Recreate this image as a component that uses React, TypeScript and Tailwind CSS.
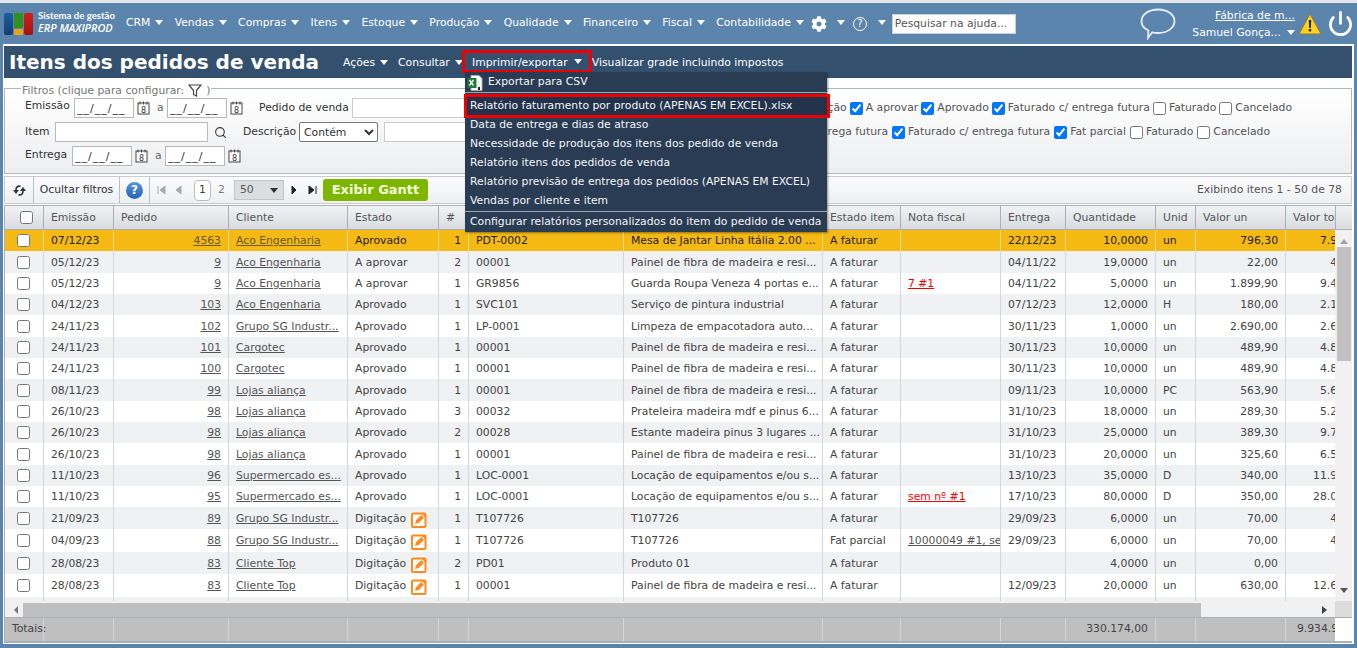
import { Search, Power } from "lucide-react";
import { FaCog } from "react-icons/fa";

const navItems = ["CRM", "Vendas", "Compras", "Itens", "Estoque", "Produção", "Qualidade", "Financeiro", "Fiscal", "Contabilidade"];

const cols = [
    "w-[39px]", "w-[70px]", "w-[115px]", "w-[119px]", "w-[91px]", "w-[30px]", "w-[155px]", "w-[199px]",
    "w-[78px]", "w-[100px]", "w-[65px]", "w-[90px]", "w-[40px]", "w-[90px]", "w-[90px]",
];

const headers = ["Emissão", "Pedido", "Cliente", "Estado", "#", "Item", "Descrição", "Estado item", "Nota fiscal", "Entrega", "Quantidade", "Unid", "Valor un", "Valor total"];

const painel = "Painel de fibra de madeira e resi...";
const loc = "Locação de equipamentos e/ou s...";

const rows = [
    { h: "h-[21px]", em: "07/12/23", ped: "4563", cli: "Aco Engenharia", est: "Aprovado", n: "1", item: "PDT-0002", desc: "Mesa de Jantar Linha Itália 2.00 ...", ei: "A faturar", nf: "", ent: "22/12/23", q: "10,0000", u: "un", vu: "796,30", vt: "7.963,00" },
    { h: "h-[22px]", em: "05/12/23", ped: "9", cli: "Aco Engenharia", est: "A aprovar", n: "2", item: "00001", desc: painel, ei: "A faturar", nf: "", ent: "04/11/22", q: "19,0000", u: "un", vu: "22,00", vt: "418,00" },
    { h: "h-[21px]", em: "05/12/23", ped: "9", cli: "Aco Engenharia", est: "A aprovar", n: "1", item: "GR9856", desc: "Guarda Roupa Veneza 4 portas e...", ei: "A faturar", nf: "7 #1", ent: "04/11/22", q: "5,0000", u: "un", vu: "1.899,90", vt: "9.499,50" },
    { h: "h-[21px]", em: "04/12/23", ped: "103", cli: "Aco Engenharia", est: "Aprovado", n: "1", item: "SVC101", desc: "Serviço de pintura industrial", ei: "A faturar", nf: "", ent: "07/12/23", q: "12,0000", u: "H", vu: "180,00", vt: "2.160,00" },
    { h: "h-[22px]", em: "24/11/23", ped: "102", cli: "Grupo SG Industr...", est: "Aprovado", n: "1", item: "LP-0001", desc: "Limpeza de empacotadora auto...", ei: "A faturar", nf: "", ent: "30/11/23", q: "1,0000", u: "un", vu: "2.690,00", vt: "2.690,00" },
    { h: "h-[21px]", em: "24/11/23", ped: "101", cli: "Cargotec", est: "Aprovado", n: "1", item: "00001", desc: painel, ei: "A faturar", nf: "", ent: "30/11/23", q: "10,0000", u: "un", vu: "489,90", vt: "4.899,00" },
    { h: "h-[21px]", em: "24/11/23", ped: "100", cli: "Cargotec", est: "Aprovado", n: "1", item: "00001", desc: painel, ei: "A faturar", nf: "", ent: "30/11/23", q: "10,0000", u: "un", vu: "489,90", vt: "4.899,00" },
    { h: "h-[22px]", em: "08/11/23", ped: "99", cli: "Lojas aliança", est: "Aprovado", n: "1", item: "00001", desc: painel, ei: "A faturar", nf: "", ent: "09/11/23", q: "10,0000", u: "PC", vu: "563,90", vt: "5.639,00" },
    { h: "h-[21px]", em: "26/10/23", ped: "98", cli: "Lojas aliança", est: "Aprovado", n: "3", item: "00032", desc: "Prateleira madeira mdf e pinus 6...", ei: "A faturar", nf: "", ent: "31/10/23", q: "18,0000", u: "un", vu: "289,30", vt: "5.207,40" },
    { h: "h-[21px]", em: "26/10/23", ped: "98", cli: "Lojas aliança", est: "Aprovado", n: "2", item: "00028", desc: "Estante madeira pinus 3 lugares ...", ei: "A faturar", nf: "", ent: "31/10/23", q: "25,0000", u: "un", vu: "389,30", vt: "9.732,50" },
    { h: "h-[22px]", em: "26/10/23", ped: "98", cli: "Lojas aliança", est: "Aprovado", n: "1", item: "00001", desc: painel, ei: "A faturar", nf: "", ent: "31/10/23", q: "20,0000", u: "un", vu: "325,60", vt: "6.512,00" },
    { h: "h-[21px]", em: "11/10/23", ped: "96", cli: "Supermercado es...", est: "Aprovado", n: "1", item: "LOC-0001", desc: loc, ei: "A faturar", nf: "", ent: "13/10/23", q: "35,0000", u: "D", vu: "340,00", vt: "11.900,00" },
    { h: "h-[21px]", em: "11/10/23", ped: "95", cli: "Supermercado es...", est: "Aprovado", n: "1", item: "LOC-0001", desc: loc, ei: "A faturar", nf: "sem nº #1", ent: "17/10/23", q: "80,0000", u: "D", vu: "350,00", vt: "28.000,00" },
    { h: "h-[22px]", em: "21/09/23", ped: "89", cli: "Grupo SG Industr...", est: "Digitação", n: "1", item: "T107726", desc: "T107726", ei: "A faturar", nf: "", ent: "29/09/23", q: "6,0000", u: "un", vu: "70,00", vt: "420,00" },
    { h: "h-[23px]", em: "04/09/23", ped: "88", cli: "Grupo SG Industr...", est: "Digitação", n: "1", item: "T107726", desc: "T107726", ei: "Fat parcial", nf: "10000049 #1, sem nº", ent: "29/09/23", q: "6,0000", u: "un", vu: "70,00", vt: "420,00" },
    { h: "h-[22px]", em: "28/08/23", ped: "83", cli: "Cliente Top", est: "Digitação", n: "2", item: "PD01", desc: "Produto 01", ei: "A faturar", nf: "", ent: "", q: "4,0000", u: "un", vu: "0,00", vt: "" },
    { h: "h-[23px]", em: "28/08/23", ped: "83", cli: "Cliente Top", est: "Digitação", n: "1", item: "00001", desc: painel, ei: "A faturar", nf: "", ent: "12/09/23", q: "20,0000", u: "un", vu: "630,00", vt: "12.600,00" },
];

const menuItems = [
    "Data de entrega e dias de atraso",
    "Necessidade de produção dos itens dos pedido de venda",
    "Relatório itens dos pedidos de venda",
    "Relatório previsão de entrega dos pedidos (APENAS EM EXCEL)",
    "Vendas por cliente e item",
];

function Caret({ className = "border-t-white" }: { className?: string }) {
    return <span className={`inline-block w-0 h-0 border-x-[4px] border-x-transparent border-t-[5px] ${className}`}></span>;
}

function Logo() {
    return (
        <div className="flex items-center w-[126px] pl-[4px] shrink-0">
            <div className="flex gap-[1px] h-[22px] w-[30px] shrink-0">
                <div className="w-[9px] rounded-[2px] bg-gradient-to-b from-[#1c5f9c] to-[#123f72]"></div>
                <div className="w-[9px] flex flex-col gap-[1px]">
                    <div className="h-[15px] rounded-[1px] bg-[#2f8f1f]"></div>
                    <div className="flex-1 rounded-[1px] bg-[#e8a317]"></div>
                </div>
                <div className="w-[9px] rounded-[2px] bg-gradient-to-b from-[#d11f1f] to-[#a80f0f]"></div>
            </div>
            <div className="ml-[4px] -mt-[3px] text-white leading-[12px]">
                <div className="font-['Lato',sans-serif] text-[9.600px] font-bold whitespace-nowrap">Sistema de gestão</div>
                <div className="font-['Open_Sans',sans-serif] text-[10.900px] font-semibold italic whitespace-nowrap">ERP MAXIPROD</div>
            </div>
        </div>
    );
}

function Calendar() {
    return (
        <svg width="13" height="14" viewBox="0 0 13 14" className="shrink-0">
            <rect x="1" y="2" width="11" height="11" fill="#fff" stroke="#444" />
            <path d="M3 0.5v3M6.5 0.5v3M10 0.5v3" stroke="#444" />
            <text x="6.5" y="11.5" fontSize="8" textAnchor="middle" fill="#333">8</text>
        </svg>
    );
}

function DateBox() {
    return <input readOnly value="__/__/__" className="w-[60px] h-[20px] shrink-0 border border-[#b8b8b8] bg-white px-[2px] text-[11px] text-[#333] tracking-[1px]" />;
}

function DateRange() {
    return (
        <div className="flex items-center">
            <DateBox />
            <span className="ml-[3px]"><Calendar /></span>
            <span className="ml-[7px] mr-[3px] w-[7px] text-[#666]">a</span>
            <DateBox />
            <span className="ml-[3px]"><Calendar /></span>
        </div>
    );
}

function Check({ label, checked }: { label: string; checked?: boolean }) {
    return (
        <span className="flex items-center">
            <input type="checkbox" readOnly checked={!!checked} className="w-[13px] h-[13px] m-0" />
            <span className="ml-[3px] text-[#555] whitespace-nowrap">{label}</span>
        </span>
    );
}

function EditIcon() {
    return (
        <svg width="16" height="17" viewBox="0 0 16 17" className="shrink-0">
            <rect x="1" y="2.500" width="13.500" height="13.500" rx="1" fill="#fff" stroke="#ff8a1e" strokeWidth="2" />
            <path d="M4 13l1-3.800L10.300 4l2.700 2.700L7.800 12z" fill="#ff8a1e" />
            <path d="M11 3.200l1.800-1.700 2.700 2.700-1.800 1.800z" fill="#ff8a1e" />
        </svg>
    );
}

function Row({ r, i }: { r: (typeof rows)[number]; i: number }) {
    const bg = i === 0 ? "bg-[#f5b914] text-[#222]" : i % 2 === 1 ? "bg-[#f0f1f3] text-[#444]" : "bg-white text-[#444]";
    const line = i === 0 ? "border-r border-[#f8dc8a]" : "border-r border-[#d3d6dc]";
    const cell = `${line} shrink-0 px-[7px] pt-[2px] flex items-center overflow-hidden whitespace-nowrap`;
    const link = i === 0 ? "underline text-[#6b5a2a]" : "underline text-[#555]";
    return (
        <div className={`flex w-[1420px] ${r.h} ${bg}`}>
            <div className={`${cols[0]} ${line} shrink-0 pl-[12px] flex items-center`}>
                <input type="checkbox" readOnly checked={false} className="w-[13px] h-[13px] m-0" />
            </div>
            <div className={`${cols[1]} ${cell}`}>{r.em}</div>
            <div className={`${cols[2]} ${cell} justify-end`}><span className={link}>{r.ped}</span></div>
            <div className={`${cols[3]} ${cell}`}><span className={link}>{r.cli}</span></div>
            <div className={`${cols[4]} ${cell} gap-[5px]`}>
                {r.est}
                {r.est === "Digitação" && <EditIcon />}
            </div>
            <div className={`${cols[5]} ${cell} justify-end`}>{r.n}</div>
            <div className={`${cols[6]} ${cell}`}>{r.item}</div>
            <div className={`${cols[7]} ${cell}`}>{r.desc}</div>
            <div className={`${cols[8]} ${cell}`}>{r.ei}</div>
            <div className={`${cols[9]} ${cell}`}>
                {r.nf && <span className={r.nf.startsWith("1000") ? "underline text-[#555]" : "underline text-[#f00000]"}>{r.nf}</span>}
            </div>
            <div className={`${cols[10]} ${cell}`}>{r.ent}</div>
            <div className={`${cols[11]} ${cell} justify-end`}>{r.q}</div>
            <div className={`${cols[12]} ${cell}`}>{r.u}</div>
            <div className={`${cols[13]} ${cell} justify-end`}>{r.vu}</div>
            <div className={`${cols[14]} ${cell} justify-end`}>{r.vt}</div>
        </div>
    );
}

function ExportMenu() {
    return (
        <div className="absolute left-[465px] top-[69px] w-[362px] h-[160px] bg-[#2a3c54] text-[#f2f4f7] shadow-[1px_1px_2px_rgba(0,0,0,0.4)]">
            <div className="h-[21px] flex items-center pl-[2px] pt-[1px] border-b border-[#9aa5b3]">
                <svg width="16" height="16" viewBox="0 0 16 16" className="shrink-0">
                    <path d="M4 0.5h8l3 3v12H4z" fill="#fff" stroke="#aaa" />
                    <rect x="0.5" y="3" width="9" height="10" fill="#1f7a3a" />
                    <path d="M2.5 5l4 5.5M6.5 5l-4 5.5" stroke="#fff" strokeWidth="1.3" />
                    <rect x="11" y="12" width="2" height="3" fill="#222" />
                </svg>
                <span className="ml-[5px]">Exportar para CSV</span>
            </div>
            <div className="relative z-10 mt-[1px] -ml-[1px] -mr-[3px] h-[24px] flex items-center pl-[3px] bg-[#22324a] border-[3px] border-[#ee0000]">
                Relatório faturamento por produto (APENAS EM EXCEL).xlsx
            </div>
            <div className="-mt-[2px]">
                {menuItems.map((m) => (
                    <div key={m} className="h-[19px] flex items-center pl-[5px] whitespace-nowrap">{m}</div>
                ))}
            </div>
            <div className="border-t border-[#9aa5b3] h-[21px] pt-[1px] flex items-center pl-[5px] whitespace-nowrap">
                Configurar relatórios personalizados do item do pedido de venda
            </div>
        </div>
    );
}

export default function App() {
    return (
        <div className="relative w-[1357px] h-[648px] overflow-hidden bg-[#5c85ae] border-t-[3px] border-[#e4e6e9] font-['DejaVu_Sans',sans-serif] text-[10.800px] text-[#444]">
            {/* top nav */}
            <div className="h-[41px] flex items-center text-white">
                <Logo />
                <div className="flex items-center gap-[11.300px]">
                    {navItems.map((n) => (
                        <span key={n} className="flex items-center gap-[5px] whitespace-nowrap">
                            {n}
                            <span className="-mt-[3px] flex"><Caret /></span>
                        </span>
                    ))}
                </div>
                <FaCog className="ml-[7px] text-[16px] shrink-0" />
                <span className="ml-[10px] -mt-[3px] flex"><Caret /></span>
                <span className="ml-[8px] w-[14px] h-[14px] rounded-full border-[1.5px] border-white flex items-center justify-center text-[10px]">?</span>
                <span className="ml-[11px] -mt-[3px] flex"><Caret /></span>
                <input readOnly placeholder="Pesquisar na ajuda..." className="ml-[6px] w-[124px] h-[20px] bg-white border border-[#ccd] px-[2px] text-[10.800px] text-[#444] placeholder:text-[#555]" />
                <svg width="36" height="32" viewBox="0 0 36 32" className="ml-[124px] shrink-0">
                    <path d="M18 1.5c9.400 0 16.500 5 16.500 11.700S27.400 25 18 25c-2 0-4-.2-5.800-.7L8 30l.4-7.500C4 20.400 1.500 17 1.500 13.200 1.500 6.500 8.600 1.500 18 1.500z" fill="none" stroke="#e8eef5" strokeWidth="1.800" />
                </svg>
                <div className="ml-[16px] w-[103px] shrink-0 text-right leading-[17px] relative">
                    <div className="underline whitespace-nowrap">Fábrica de m...</div>
                    <div className="whitespace-nowrap flex items-center justify-end gap-[6px]">
                        Samuel Gonça...
                        <Caret />
                    </div>
                </div>
                <svg width="24" height="22" viewBox="0 0 24 22" className="ml-[3px] shrink-0">
                    <path d="M12 1L23 21H1z" fill="#ffd21f" stroke="#8a7a40" />
                    <path d="M10.800 7h2.400l-.4 8h-1.600z" fill="#222" />
                    <rect x="10.800" y="16" width="2.400" height="2.400" fill="#222" />
                </svg>
                <Power className="ml-[5px] shrink-0 text-white" size={27} strokeWidth={2.400} />
            </div>

            {/* main panel */}
            <div className="relative mx-[3px] h-[600px] bg-white pt-[2px] pl-[1px] pr-[2px]">
                <div className="h-[32px] bg-[#34506f] flex items-center text-white">
                    <h1 className="ml-[5px] w-[334px] shrink-0 text-[20px] font-bold whitespace-nowrap">Itens dos pedidos de venda</h1>
                    <span className="flex items-center gap-[5px] mt-[3px]">Ações <span className="-mt-[3px] flex"><Caret /></span></span>
                    <span className="ml-[10px] flex items-center gap-[5px] mt-[3px]">Consultar <span className="-mt-[3px] flex"><Caret /></span></span>
                    <span className="ml-[129px] mt-[3px] whitespace-nowrap">Visualizar grade incluindo impostos</span>
                </div>

                <fieldset className="mt-[2px] h-[94px] border border-[#b2b7be] bg-gradient-to-b from-white to-[#edeef0] pl-[20px]">
                    <legend className="-ml-[4px] px-[1px] pt-[4px] flex items-center text-[#777] leading-[13px]">
                        Filtros (clique para configurar:
                        <svg width="14" height="13" viewBox="0 0 14 13" className="mx-[4px] shrink-0">
                            <path d="M1 1h12L8.500 6.500V12l-3-1.500v-4z" fill="none" stroke="#444" strokeWidth="1.200" />
                        </svg>
                        )
                    </legend>
                    <div className="flex items-center h-[20px] mt-[1px] pr-[59px]">
                        <span className="-mt-[3px] w-[49px] text-[#333]">Emissão</span>
                        <DateRange />
                        <span className="ml-[16px] w-[93px] text-[#333] whitespace-nowrap">Pedido de venda</span>
                        <input readOnly className="w-[120px] h-[20px] border border-[#ccc] bg-white" />
                        <div className="ml-auto flex items-center gap-[3px]">
                            <span className="text-[#555]">Digitação</span>
                            <Check label="A aprovar" checked />
                            <Check label="Aprovado" checked />
                            <Check label="Faturado c/ entrega futura" checked />
                            <Check label="Faturado" />
                            <Check label="Cancelado" />
                        </div>
                    </div>
                    <div className="flex items-center h-[20px] mt-[4px] pr-[81px]">
                        <span className="w-[30px] text-[#333]">Item</span>
                        <input readOnly className="w-[153px] h-[20px] border border-[#b8b8b8] bg-white" />
                        <Search className="ml-[6px] shrink-0 text-[#333]" size={13} strokeWidth={2} />
                        <span className="ml-[16px] w-[56px] text-[#333]">Descrição</span>
                        <select className="w-[79px] h-[20px] border border-[#777] rounded-[2px] bg-white text-[10.800px] text-[#333]">
                            <option>Contém</option>
                        </select>
                        <input readOnly className="ml-[6px] w-[120px] h-[20px] border border-[#ccc] bg-white" />
                        <div className="ml-auto flex items-center gap-[4px]">
                            <span className="text-[#555] whitespace-nowrap">Entrega futura</span>
                            <Check label="Faturado c/ entrega futura" checked />
                            <Check label="Fat parcial" checked />
                            <Check label="Faturado" />
                            <Check label="Cancelado" />
                        </div>
                    </div>
                    <div className="flex items-center h-[20px] mt-[4px]">
                        <span className="-mt-[1px] w-[47px] text-[#333]">Entrega</span>
                        <DateRange />
                    </div>
                </fieldset>

                {/* toolbar */}
                <div className="mt-[2px] h-[28px] flex items-center border border-[#c8ccd2] bg-gradient-to-b from-[#fbfbfc] to-[#eef0f2]">
                    <div className="w-[29px] h-full border-r border-[#b9bdc4] flex items-center justify-center text-[#333]">
                        <svg width="15" height="13" viewBox="0 0 15 13">
                            <path d="M8.500 2.200C5.500 1.800 4 3 4 6" fill="none" stroke="#333" strokeWidth="1.700" />
                            <path d="M1 6h6l-3 4z" fill="#333" />
                            <path d="M6.500 10.800c3 .4 4.500-.8 4.500-3.800" fill="none" stroke="#333" strokeWidth="1.700" />
                            <path d="M8 7h6l-3-4z" fill="#333" />
                        </svg>
                    </div>
                    <div className="w-[86px] h-full pt-[1px] border-r border-[#b9bdc4] flex items-center justify-center text-[#333] whitespace-nowrap">Ocultar filtros</div>
                    <div className="w-[30px] h-full border-r border-[#b9bdc4] flex items-center justify-center">
                        <span className="w-[17px] h-[17px] rounded-full bg-gradient-to-b from-[#5b93d8] to-[#2263b5] text-white font-bold text-[12px] flex items-center justify-center">?</span>
                    </div>
                    <svg width="9" height="10" viewBox="0 0 9 10" className="ml-[7px] shrink-0"><path d="M1 1v8M8 1L3 5l5 4z" stroke="#aaa" fill="#aaa" /></svg>
                    <svg width="7" height="10" viewBox="0 0 7 10" className="ml-[9px] shrink-0"><path d="M6 1L1 5l5 4z" fill="#aaa" stroke="#aaa" /></svg>
                    <span className="ml-[12px] w-[17px] h-[21px] border border-[#bbb] rounded-[4px] bg-white flex items-center justify-center text-[#444]">1</span>
                    <span className="ml-[7px] w-[7px] text-[#777]">2</span>
                    <div className="ml-[9px] w-[50px] h-[20px] border border-[#c2c5ca] bg-[#dcdddf] flex items-center pl-[5px] pr-[5px] justify-between text-[#555]">
                        50
                        <Caret className="border-t-[#333]" />
                    </div>
                    <svg width="6" height="10" viewBox="0 0 6 10" className="ml-[7px] shrink-0"><path d="M1 1l4 4-4 4z" fill="#222" stroke="#222" /></svg>
                    <svg width="9" height="10" viewBox="0 0 9 10" className="ml-[11px] shrink-0"><path d="M1 1l5 4-5 4zM8 1v8" fill="#222" stroke="#222" /></svg>
                    <button className="ml-[6px] w-[105px] h-[22px] rounded-[3px] bg-[#7eb500] text-[#f4ffd8] font-bold text-[13px]">Exibir Gantt</button>
                    <span className="ml-auto pr-[9px] text-[#555] whitespace-nowrap">Exibindo itens 1 - 50 de 78</span>
                </div>

                {/* grid */}
                <div className="mt-[1px] border-l border-[#a9b0ba] w-[1348px]">
                    <div className="flex h-[25px] border-y border-[#a9b0ba] bg-gradient-to-b from-[#f2f3f5] to-[#d9dbdf] text-[#555] overflow-hidden">
                        <div className="w-[1330px] flex overflow-hidden shrink-0">
                            <div className={`${cols[0]} shrink-0 border-r border-[#a9b0ba] pl-[15px] flex items-center`}>
                                <input type="checkbox" readOnly checked={false} className="w-[13px] h-[13px] m-0" />
                            </div>
                            {headers.map((h, i) => (
                                <div key={h} className={`${cols[i + 1]} shrink-0 border-r border-[#a9b0ba] px-[7px] pt-[1px] flex items-center whitespace-nowrap`}>{h}</div>
                            ))}
                        </div>
                        <div className="flex-1 border-l border-[#a9b0ba]"></div>
                    </div>
                    <div className="flex h-[371px]">
                        <div className="w-[1330px] shrink-0 overflow-hidden">
                            {rows.map((r, i) => (
                                <Row key={i} r={r} i={i} />
                            ))}
                            <div className="flex h-[4px] w-[1420px] bg-[#f0f1f3]">
                                {cols.map((c, i) => (
                                    <div key={i} className={`${c} shrink-0 border-r border-[#d3d6dc]`}></div>
                                ))}
                            </div>
                        </div>
                        <div className="flex-1 bg-[#f1f1f1] flex flex-col items-center">
                            <div className="mt-[6px] h-[11px] flex items-center"><span className="w-0 h-0 border-x-[4px] border-x-transparent border-b-[5px] border-b-[#a3a3a3]"></span></div>
                            <div className="w-[14px] h-[114px] bg-[#c1c1c1]"></div>
                            <div className="mt-auto mb-[3px]"><Caret className="border-t-[#555]" /></div>
                        </div>
                    </div>
                    <div className="flex h-[17px] bg-[#f1f1f1] border-b border-[#a9b0ba]">
                        <div className="w-[1330px] shrink-0 flex items-center h-[15px] mt-[1px]">
                            <span className="ml-[9px] w-0 h-0 border-y-[4px] border-y-transparent border-r-[4px] border-r-[#777]"></span>
                            <div className="ml-[5px] w-[1178px] h-[14px] bg-[#bfbfbf]"></div>
                            <span className="ml-auto mr-[8px] w-0 h-0 border-y-[4px] border-y-transparent border-l-[5px] border-l-[#444]"></span>
                        </div>
                        <div className="flex-1 bg-[#dcdcdc]"></div>
                    </div>
                    <div className="flex h-[23px]">
                        <div className="w-[1330px] shrink-0 flex overflow-hidden bg-[#bfbfbf] text-[#444]">
                            <div className={`${cols[0]} shrink-0 border-r border-[#d6d6d6] pl-[7px] flex items-center overflow-visible whitespace-nowrap`}>Totais:</div>
                            <div className={`${cols[1]} shrink-0 border-r border-[#d6d6d6]`}></div>
                            <div className={`${cols[2]} shrink-0 border-r border-[#d6d6d6]`}></div>
                            <div className={`${cols[3]} shrink-0 border-r border-[#d6d6d6]`}></div>
                            <div className={`${cols[4]} shrink-0 border-r border-[#d6d6d6]`}></div>
                            <div className={`${cols[5]} shrink-0 border-r border-[#d6d6d6]`}></div>
                            <div className={`${cols[6]} shrink-0 border-r border-[#d6d6d6]`}></div>
                            <div className={`${cols[7]} shrink-0 border-r border-[#d6d6d6]`}></div>
                            <div className={`${cols[8]} shrink-0 border-r border-[#d6d6d6]`}></div>
                            <div className={`${cols[9]} shrink-0 border-r border-[#d6d6d6]`}></div>
                            <div className={`${cols[10]} shrink-0 border-r border-[#d6d6d6]`}></div>
                            <div className={`${cols[11]} shrink-0 border-r border-[#d6d6d6] pr-[7px] flex items-center justify-end`}>330.174,00</div>
                            <div className={`${cols[12]} shrink-0 border-r border-[#d6d6d6]`}></div>
                            <div className={`${cols[13]} shrink-0 border-r border-[#d6d6d6]`}></div>
                            <div className={`${cols[14]} shrink-0 pr-[7px] flex items-center justify-end`}>9.934.970,00</div>
                        </div>
                    </div>
                    <div className="h-[2px] bg-[#a9b0ba] -ml-[1px]"></div>
                </div>

                {/* Imprimir/exportar button stays over the title bar */}
                <div className="absolute left-[459px] top-[6px] w-[130px] h-[23px] pt-[3px] border-[3px] border-[#ee0000] bg-[#34506f] text-white flex items-center pl-[7px] gap-[6px] whitespace-nowrap">
                    Imprimir/exportar
                    <span className="-mt-[3px] flex"><Caret /></span>
                </div>
            </div>

            <ExportMenu />
        </div>
    );
}
